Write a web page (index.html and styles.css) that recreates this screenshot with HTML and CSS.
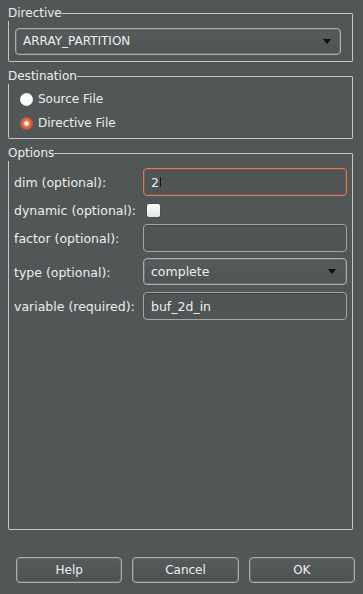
FILE: index.html
```html
<!DOCTYPE html>
<html>
<head>
<meta charset="utf-8">
<link rel="stylesheet" href="styles.css">
</head>
<body>
<div class="dialog">
  <section class="group">
    <div class="group-head"><span class="group-title">Directive</span><span class="group-line"></span></div>
    <div class="group-body b-directive">
      <div class="combo combo-main"><span>ARRAY_PARTITION</span><span class="arrow"></span></div>
    </div>
  </section>

  <section class="group">
    <div class="group-head"><span class="group-title">Destination</span><span class="group-line"></span></div>
    <div class="group-body b-dest">
      <div class="radio-row"><span class="radio"></span><span>Source File</span></div>
      <div class="radio-row"><span class="radio on"></span><span>Directive File</span></div>
    </div>
  </section>

  <section class="group">
    <div class="group-head"><span class="group-title">Options</span><span class="group-line"></span></div>
    <div class="group-body b-options">
      <div class="form">
        <label class="lbl">dim (optional):</label>
        <div class="input focus"><span>2</span><span class="caret"></span></div>

        <label class="lbl">dynamic (optional):</label>
        <div class="check-cell"><span class="check"></span></div>

        <label class="lbl">factor (optional):</label>
        <div class="input"></div>

        <label class="lbl">type (optional):</label>
        <div class="combo combo-type"><span>complete</span><span class="arrow"></span></div>

        <label class="lbl">variable (required):</label>
        <div class="input"><span>buf_2d_in</span></div>
      </div>
    </div>
  </section>

  <div class="buttons">
    <button class="btn">Help</button>
    <button class="btn">Cancel</button>
    <button class="btn">OK</button>
  </div>
</div>
</body>
</html>
```

FILE: styles.css
```css
* { box-sizing: border-box; }
html, body {
  margin: 0;
  padding: 0;
  background: #515656;
  width: 363px;
  height: 594px;
  overflow: hidden;
}
body {
  font-family: "DejaVu Sans", "Liberation Sans", sans-serif;
  font-size: 12px;
  color: #eeeeee;
}
.dialog {
  padding: 5px 10px 0 8px;
  display: flex;
  flex-direction: column;
  gap: 6px;
}
.group {
  width: 345px;
}
.group-head {
  display: flex;
  height: 16px;
  line-height: 16px;
}
.group-title {
  color: #eeeeee;
  white-space: nowrap;
}
.group-line {
  flex: 1;
  margin-top: 8px;
  height: 8px;
  border-top: 1px solid #c6c8c8;
  border-right: 1px solid #c6c8c8;
  border-top-right-radius: 2px;
}
.group-body {
  border: 1px solid #c6c8c8;
  border-top: none;
  border-radius: 0 0 2px 2px;
}
.b-directive {
  padding: 7px 11px 6px 6px;
}
.b-dest {
  padding: 3px 6px 3px 11px;
}
.b-options {
  padding: 7px 5px 0 5px;
  height: 369px;
}
.combo {
  height: 27px;
  border: 1px solid #a9adad;
  border-radius: 4px;
  box-shadow: inset 0 0 0 1px #6b7070, inset 0 1px 2px rgba(0,0,0,0.25);
  background: linear-gradient(#565b5c, #4e5354);
  display: flex;
  align-items: center;
  justify-content: space-between;
  color: #f0f0f0;
}
.combo-main {
  font-size: 12px;
  padding: 0 9px 1px 7px;
}
.combo-type {
  font-size: 12.5px;
  padding: 0 10px 0 7px;
  align-self: start;
}
.arrow {
  width: 0;
  height: 0;
  border-left: 4px solid transparent;
  border-right: 4px solid transparent;
  border-top: 5px solid #0c0c0c;
}
.radio-row {
  height: 24px;
  display: flex;
  align-items: center;
  gap: 5px;
}
.radio {
  width: 13px;
  height: 13px;
  border-radius: 50%;
  background: radial-gradient(circle at 50% 45%, #ffffff 55%, #dcdcdc 80%, #9a9a9a 100%);
}
.radio.on {
  background: radial-gradient(circle, #ffffff 0 1.8px, #e8845c 2.6px, #d45c2e 55%, #a84420 100%);
}
.form {
  display: grid;
  grid-template-columns: 129px 1fr;
  grid-template-rows: 28px 16px 28px 28px 28px;
  row-gap: 6px;
  align-items: center;
  font-size: 12.5px;
}
.lbl {
  padding-left: 0;
  white-space: nowrap;
}
.input {
  height: 28px;
  border: 1px solid #a3a7a7;
  border-radius: 4px;
  background: #4f5455;
  box-shadow: inset 0 1px 1px rgba(0,0,0,0.2);
  display: flex;
  align-items: center;
  padding: 0 7px;
  color: #f0f0f0;
}
.input.focus {
  border-color: #e07a52;
  box-shadow: inset 0 0 0 1px rgba(224,122,82,0.2);
}
.caret {
  width: 1px;
  height: 10px;
  background: #151515;
  margin-left: 1px;
}
.check-cell {
  display: flex;
  align-items: center;
  padding-left: 4px;
}
.check {
  width: 13px;
  height: 13px;
  border-radius: 2px;
  background: linear-gradient(#ffffff, #e4e4e4);
  box-shadow: 0 0 1px rgba(0,0,0,0.5);
}
.buttons {
  margin-top: 21px;
  display: grid;
  grid-template-columns: repeat(3, 1fr);
  column-gap: 10px;
  padding-left: 8px;
  width: 347px;
}
.btn {
  height: 26px;
  font-family: "DejaVu Sans", "Liberation Sans", sans-serif;
  font-size: 12px;
  color: #f0f0f0;
  background: linear-gradient(#555a5b, #4d5253);
  border: 1px solid #aaaeae;
  border-radius: 4px;
  box-shadow: inset 0 0 0 1px #686d6d;
  padding: 0;
}
```
